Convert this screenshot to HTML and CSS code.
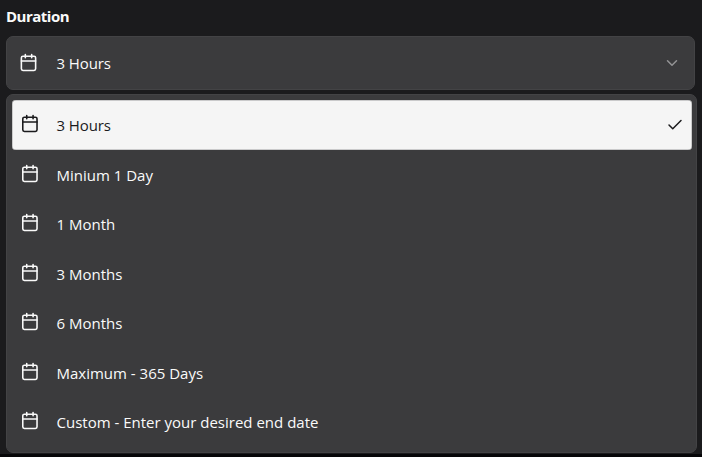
FILE: index.html
```
<!DOCTYPE html>
<html lang="en">
<head>
<meta charset="utf-8">
<title>Duration</title>
<link rel="stylesheet" href="styles.css">
</head>
<body>
<svg width="0" height="0" class="defs" aria-hidden="true">
  <symbol id="calendar" viewBox="0 0 24 24"><rect x="3" y="4" width="18" height="18" rx="2"/><path d="M8 2v4M16 2v4M3 10h18"/></symbol>
</svg>
<main class="field">
  <div class="label" id="duration-label">Duration</div>
  <div class="trigger" role="combobox" aria-labelledby="duration-label" aria-expanded="true">
    <svg class="icon"><use href="#calendar"/></svg>
    <span class="text">3 Hours</span>
    <svg class="chevron" viewBox="0 0 24 24"><path d="m6 9 6 6 6-6"/></svg>
  </div>
  <div class="menu" role="listbox">
    <div class="option selected" role="option" aria-selected="true">
      <svg class="icon"><use href="#calendar"/></svg>
      <span class="text">3 Hours</span>
      <svg class="check" viewBox="0 0 24 24"><path d="M20 6 9 17l-5-5"/></svg>
    </div>
    <div class="option" role="option"><svg class="icon"><use href="#calendar"/></svg><span class="text">Minium 1 Day</span></div>
    <div class="option" role="option"><svg class="icon"><use href="#calendar"/></svg><span class="text">1 Month</span></div>
    <div class="option" role="option"><svg class="icon"><use href="#calendar"/></svg><span class="text">3 Months</span></div>
    <div class="option" role="option"><svg class="icon"><use href="#calendar"/></svg><span class="text">6 Months</span></div>
    <div class="option" role="option"><svg class="icon"><use href="#calendar"/></svg><span class="text">Maximum - 365 Days</span></div>
    <div class="option" role="option"><svg class="icon"><use href="#calendar"/></svg><span class="text">Custom - Enter your desired end date</span></div>
  </div>
</main>
</body>
</html>
```
FILE: styles.css
```
* { box-sizing: border-box; }
body {
  margin: 0;
  height: 457px;
  overflow: hidden;
  background: #060608;
  color: #fafafa;
  font: 500 15px/20px "Segoe UI", "Open Sans", "Noto Sans", sans-serif;
  letter-spacing: 0;
}
.defs { display: none; }
.field {
  height: 454px;
  padding: 6px 5px 0 6px;
  background: #1b1b1d;
}
.label {
  height: 30px;
  font-weight: 700;
  letter-spacing: -0.5px;
}
svg {
  flex: none;
  fill: none;
  stroke: currentColor;
  stroke-width: 2;
  stroke-linecap: round;
  stroke-linejoin: round;
}
.trigger {
  display: flex;
  align-items: center;
  width: 689px;
  height: 54px;
  padding: 0 13px 0 12px;
  border: 1px solid #434345;
  border-radius: 7px;
  background: #3b3b3d;
  letter-spacing: -0.1px;
}
.icon { width: 19px; height: 19px; }
.trigger .icon { margin-top: -1px; }
.text { margin-left: 18.5px; white-space: nowrap; }
.chevron {
  width: 18px;
  height: 18px;
  margin-left: auto;
  color: #939395;
}
.menu {
  height: 358.5px;
  margin-top: 4px;
  padding: 5px 4px 4px 5px;
  border: 1px solid #434345;
  border-radius: 7px;
  background: #3b3b3d;
}
.option {
  display: flex;
  align-items: center;
  height: 49.5px;
  padding: 0 8px;
  border-radius: 4px;
}
.option .icon { margin-top: -2.4px; transform: translateX(0.4px); }
.option .text { margin-left: 17.5px; padding-top: 0.6px; }
.selected {
  background: #f5f5f5;
  box-shadow: inset 0 0 0 0.5px #a0a0a1;
  color: #1b1b1d;
  font-weight: 400;
  letter-spacing: -0.1px;
}
.check { width: 18px; height: 18px; margin-left: auto; }
```
